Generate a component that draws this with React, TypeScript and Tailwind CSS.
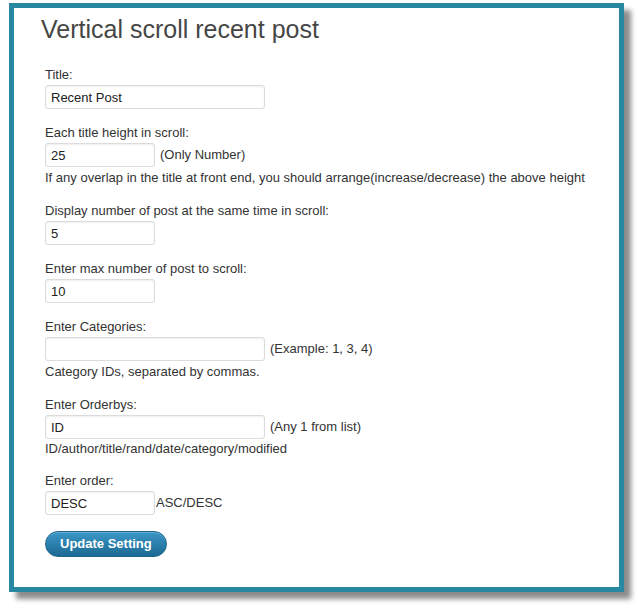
const font = { fontFamily: '"Liberation Sans", Arial, sans-serif' };

function Box({ value, wide }: { value: string; wide?: boolean }) {
  return (
    <input
      type="text"
      defaultValue={value}
      className={
        (wide ? "w-[220px]" : "w-[110px]") +
        " h-[24px] rounded-[3px] border border-[#dcdcdc] bg-white px-[5px] text-[13px] text-[#222] shadow-[inset_0_1px_2px_rgba(0,0,0,0.07)] outline-none align-middle"
      }
    />
  );
}

function Field({
  label,
  value,
  wide,
  after,
  tight,
  help,
  gap = "mt-[15px]",
  helpGap = "mt-[2px]",
}: {
  label: string;
  value: string;
  wide?: boolean;
  after?: string;
  tight?: boolean;
  help?: string;
  gap?: string;
  helpGap?: string;
}) {
  return (
    <div className={gap}>
      <div className="text-[13px] leading-[18px] text-[#333]">{label}</div>
      <div className="mt-[1px] flex h-[24px] items-center text-[13px] text-[#333]">
        <Box value={value} wide={wide} />
        {after && <span className={tight ? "ml-[1px]" : "ml-[5px]"}>{after}</span>}
      </div>
      {help && <div className={helpGap + " text-[13px] leading-[18px] text-[#333]"}>{help}</div>}
    </div>
  );
}

export default function App() {
  return (
    <div className="min-h-[609px] bg-white pl-[9px] pt-[3px]" style={font}>
      <div className="h-[589px] w-[615px] border-[5px] border-[#2887a1] bg-white pl-[27px] pt-[7px] shadow-[7px_7px_5px_rgba(0,0,0,0.45)]">
        <h2 className="text-[25px] leading-[29px] text-[#464646]">Vertical scroll recent post</h2>

        <form className="mt-[22px] pl-[4px]" onSubmit={(e) => e.preventDefault()}>
          <Field gap="" label="Title:" value="Recent Post" wide />
          <Field
            label="Each title height in scroll:"
            value="25"
            after="(Only Number)"
            help="If any overlap in the title at front end, you should arrange(increase/decrease) the above height"
          />
          <Field label="Display number of post at the same time in scroll:" value="5" />
          <Field label="Enter max number of post to scroll:" value="10" />
          <Field
            label="Enter Categories:"
            value=""
            wide
            after="(Example: 1, 3, 4)"
            help="Category IDs, separated by commas."
          />
          <Field
            label="Enter Orderbys:"
            value="ID"
            wide
            after="(Any 1 from list)"
            helpGap="mt-[1px]"
            help="ID/author/title/rand/date/category/modified"
          />
          <Field gap="mt-[14px]" label="Enter order:" value="DESC" after="ASC/DESC" tight />

          <button
            type="submit"
            className="mt-[16px] h-[26px] rounded-full border border-[#1a6389] bg-gradient-to-b from-[#3b97c6] to-[#1c6a93] px-[14px] text-[13px] font-bold text-white shadow-[inset_0_1px_0_rgba(255,255,255,0.25)]"
          >
            Update Setting
          </button>
        </form>
      </div>
    </div>
  );
}
